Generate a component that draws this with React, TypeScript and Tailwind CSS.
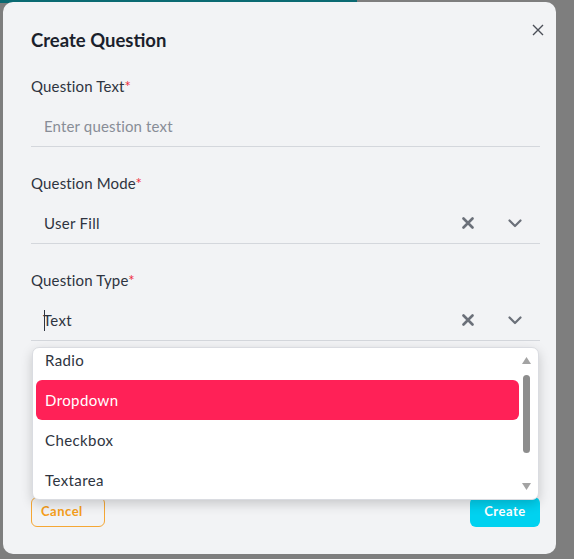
import React from "react";

const font = { fontFamily: "Lato, 'Open Sans', sans-serif" };

function Label({ text }: { text: string }) {
  return (
    <div className="h-6 leading-6 text-[15px] tracking-[0.15px] text-[#2e3440]">
      {text}
      <span className="text-[#ef2b3c]">*</span>
    </div>
  );
}

function ClearIcon() {
  return (
    <svg width="12" height="12" viewBox="0 0 12 12" className="text-[#6b7079]">
      <path d="M1.5 1.5L10.5 10.5M10.5 1.5L1.5 10.5" stroke="currentColor" strokeWidth="2.6" strokeLinecap="round" />
    </svg>
  );
}

function Chevron() {
  return (
    <svg width="14" height="9" viewBox="0 0 14 9" className="text-[#6b7079]">
      <path d="M1.5 1.5L7 7L12.5 1.5" stroke="currentColor" strokeWidth="2.2" fill="none" strokeLinecap="round" strokeLinejoin="round" />
    </svg>
  );
}

function Select({ value, caret }: { value: string; caret?: boolean }) {
  return (
    <div className="mt-2 flex h-[41px] items-center border-b border-[#d4d7dc] pl-[13px] pr-[18px]">
      <div className="flex flex-1 items-center text-[15px] tracking-[0.3px] text-[#2e3440]">
        {caret && <span className="-mr-[2px] h-[21px] w-px bg-[#2e3440]" />}
        {value}
      </div>
      <div className="flex items-center gap-[34px]">
        <ClearIcon />
        <Chevron />
      </div>
    </div>
  );
}

const options = ["Text", "Radio", "Dropdown", "Checkbox", "Textarea", "Number"];

export default function App() {
  return (
    <div className="relative h-[559px] w-[574px] overflow-hidden bg-[#7e7e7e]" style={font}>
      <div className="h-[3px] w-[357px] bg-[#0b6a72]" />

      <div className="absolute left-[3px] top-[2px] flex h-[552px] w-[553px] flex-col rounded-[10px] bg-[#f2f3f5] pl-[28px] pr-[16px] pt-[24px]">
        <button className="absolute right-[8px] top-[18px] p-1 text-[#4b4f58]">
          <svg width="12" height="12" viewBox="0 0 12 12">
            <path d="M1 1L11 11M11 1L1 11" stroke="currentColor" strokeWidth="1.4" />
          </svg>
        </button>

        <h2 className="h-7 text-[18.5px] font-bold leading-7 text-[#1b1f2c]">Create Question</h2>

        <div className="mt-5">
          <Label text="Question Text" />
          <div className="mt-2 flex h-[41px] items-center border-b border-[#d4d7dc] pl-[13px] text-[15px] tracking-[0.15px] text-[#888d97]">
            Enter question text
          </div>
        </div>

        <div className="mt-6">
          <Label text="Question Mode" />
          <Select value="User Fill" />
        </div>

        <div className="relative mt-6">
          <Label text="Question Type" />
          <Select value="Text" caret />

          <div className="absolute left-[1px] right-[1px] top-[79px] z-10 flex h-[153px] overflow-hidden rounded-[7px] border border-[#dadce1] bg-white pr-[5px] shadow-[0_4px_12px_rgba(0,0,0,0.18)]">
            <div className="flex-1 overflow-hidden pl-[3px]">
              <div className="-mt-[48px]">
                {options.map((o) => (
                  <div
                    key={o}
                    className={
                      o === "Dropdown"
                        ? "flex h-10 items-center rounded-[6px] bg-[#ff2157] px-[9px] text-[15px] tracking-[0.4px] text-white"
                        : "flex h-10 items-center px-[9px] text-[15px] tracking-[0.4px] text-[#2e3440]"
                    }
                  >
                    {o}
                  </div>
                ))}
              </div>
            </div>
            <div className="flex w-[14px] flex-col items-center py-[9px]">
              <svg width="9" height="7" viewBox="0 0 9 7">
                <path d="M4.5 0L9 7H0Z" fill="#a3a3a3" />
              </svg>
              <div className="mt-[11px] h-[78px] w-[7px] rounded-full bg-[#8d8d8d]" />
              <div className="flex-1" />
              <svg width="9" height="7" viewBox="0 0 9 7">
                <path d="M0 0H9L4.5 7Z" fill="#a3a3a3" />
              </svg>
            </div>
          </div>
        </div>

        <div className="mt-[156px] flex items-center justify-between">
          <button className="h-[30px] w-[74px] rounded-[6px] border border-[#f5a735] pl-[9px] text-left text-[13px] font-bold tracking-[0.5px] text-[#f59e1b]">
            Cancel
          </button>
          <button className="h-[30px] w-[70px] rounded-[6px] bg-[#00d2f0] text-[13px] font-bold tracking-[0.5px] text-white">
            Create
          </button>
        </div>
      </div>
    </div>
  );
}
